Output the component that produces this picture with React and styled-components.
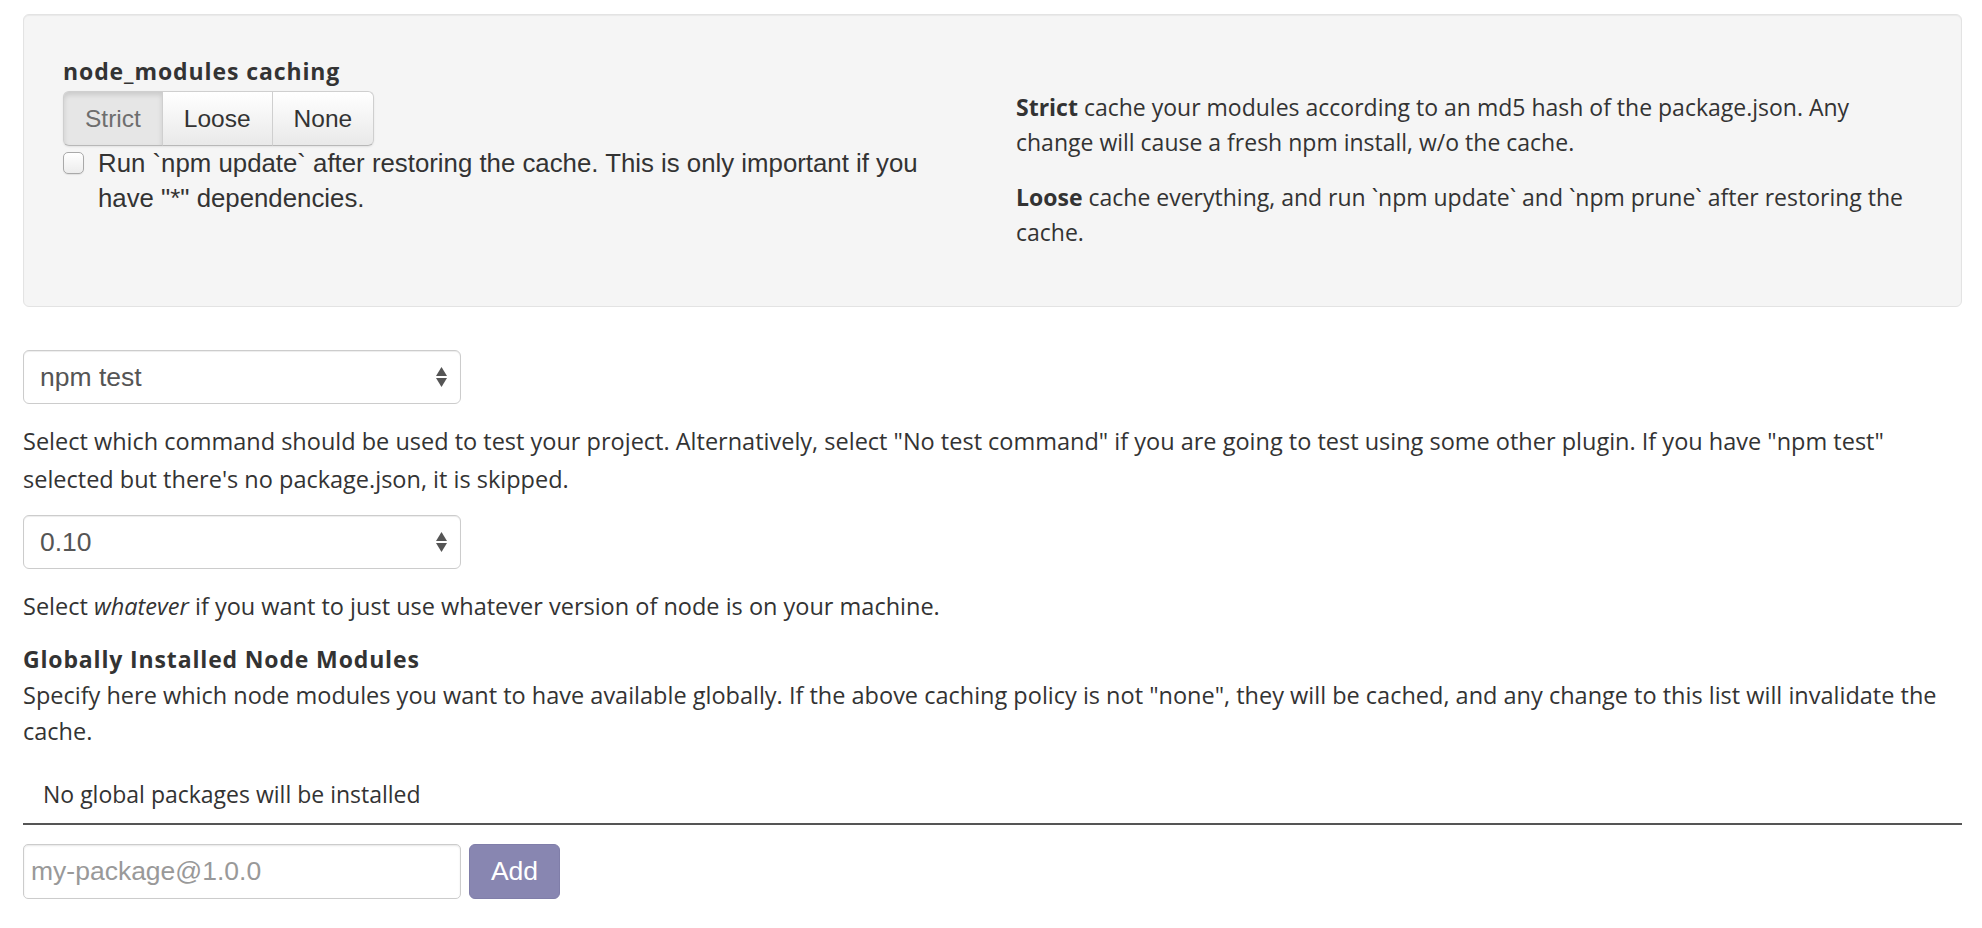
import React, { useState } from 'react';
import styled, { createGlobalStyle } from 'styled-components';

const GlobalStyle = createGlobalStyle`
    body {
        margin: 0;
        background: #fff;
        font-family: "Open Sans", "Noto Sans", sans-serif;
        color: #333;
    }
`;

const Page = styled.div`
    width: 1939px;
    padding: 14px 20px 0 23px;
    font-size: 23px;
    line-height: 35px;
`;

const Well = styled.div`
    display: grid;
    grid-template-columns: 906px 906px;
    column-gap: 47px;
    padding: 39px 39px 36px;
    background: #f5f5f5;
    border: 1px solid #e3e3e3;
    border-radius: 6px;
    box-shadow: inset 0 1px 1px rgba(0, 0, 0, 0.05);
`;

const LeftCol = styled.div`
    display: flex;
    flex-direction: column;
    align-items: flex-start;
`;

const RightCol = styled.div`
    padding-top: 36px;

    p {
        margin: 0 0 20px;
    }
`;

const Title = styled.div`
    font-weight: bold;
    letter-spacing: 0.9px;
`;

const BtnGroup = styled.div`
    display: flex;
    margin-top: 2px;
    border-radius: 6px;
    box-shadow: 0 1px 2px rgba(0, 0, 0, 0.08);
`;

const GroupButton = styled.button`
    height: 55px;
    padding: 0 21px;
    font-family: "Liberation Sans", Arial, sans-serif;
    font-size: 24.5px;
    color: ${({ active }) => (active ? '#6e6e6e' : '#333')};
    background: ${({ active }) => (active ? '#e6e6e6' : 'linear-gradient(#ffffff, #e9e9e9)')};
    box-shadow: ${({ active }) => (active ? 'inset 0 3px 5px rgba(0, 0, 0, 0.12)' : 'none')};
    border: 1px solid #cfcfcf;
    border-bottom-color: #b8b8b8;
    margin-left: -1px;
    cursor: pointer;

    &:first-child {
        margin-left: 0;
        border-radius: 6px 0 0 6px;
    }

    &:last-child {
        border-radius: 0 6px 6px 0;
    }
`;

const CheckRow = styled.label`
    display: flex;
    align-items: flex-start;
    gap: 14px;
    font-family: "Liberation Sans", Arial, sans-serif;
    font-size: 25.8px;
    line-height: 35px;
    color: #333;
`;

const CheckBox = styled.input`
    appearance: none;
    flex: none;
    width: 21px;
    height: 22px;
    margin: 6px 0 0;
    border: 1px solid #a9a9a9;
    border-radius: 5px;
    background: linear-gradient(#ffffff, #ececec);
    box-shadow: 0 1px 1px rgba(0, 0, 0, 0.08);
`;

const SelectWrap = styled.div`
    position: relative;
    width: 438px;
    margin-top: ${({ top }) => top}px;
`;

const Select = styled.select`
    appearance: none;
    width: 100%;
    height: 54px;
    padding: 0 40px 0 16px;
    font-family: "Liberation Sans", Arial, sans-serif;
    font-size: 26.5px;
    color: #555;
    background: #fff;
    border: 1px solid #ccc;
    border-radius: 6px;
    box-shadow: inset 0 1px 1px rgba(0, 0, 0, 0.075);
`;

const Arrows = styled.svg`
    position: absolute;
    right: 14px;
    top: 17px;
    pointer-events: none;
`;

const Help = styled.p`
    margin: ${({ top }) => top}px 0 0;
    font-size: 23.5px;
    line-height: ${({ lh }) => lh || 38}px;
`;

const Heading = styled.div`
    margin-top: 17px;
    font-weight: bold;
    letter-spacing: 0.85px;
`;

const Empty = styled.div`
    margin-top: 28px;
    padding-left: 20px;
`;

const Divider = styled.hr`
    margin: 11px 0 0;
    border: 0;
    border-top: 2px solid #555;
`;

const AddRow = styled.div`
    display: flex;
    gap: 8px;
    margin-top: 19px;
`;

const Input = styled.input`
    width: 438px;
    height: 55px;
    box-sizing: border-box;
    padding: 0 7px;
    font-family: "Liberation Sans", Arial, sans-serif;
    font-size: 26.5px;
    color: #555;
    border: 1px solid #ccc;
    border-radius: 5px;
    box-shadow: inset 0 1px 2px rgba(0, 0, 0, 0.1);

    &::placeholder {
        color: #999;
    }
`;

const AddButton = styled.button`
    width: 91px;
    height: 55px;
    font-family: "Liberation Sans", Arial, sans-serif;
    font-size: 26.5px;
    color: #fff;
    background: #8886b1;
    border: 1px solid #807ea9;
    border-radius: 6px;
    cursor: pointer;
`;

function SelectBox({ value, options, top }) {
    return (
        <SelectWrap top={top}>
            <Select defaultValue={value}>
                {options.map((o) => <option key={o}>{o}</option>)}
            </Select>
            <Arrows width="11" height="20" viewBox="0 0 11 20">
                <path d="M5.5 0 L11 9 L0 9 Z" fill="#555" />
                <path d="M0 11 L11 11 L5.5 20 Z" fill="#555" />
            </Arrows>
        </SelectWrap>
    );
}

export default function App() {
    const [mode, setMode] = useState('Strict');

    return (
        <Page>
            <GlobalStyle />
            <Well>
                <LeftCol>
                    <Title>node_modules caching</Title>
                    <BtnGroup>
                        {['Strict', 'Loose', 'None'].map((m) => (
                            <GroupButton key={m} active={mode === m} onClick={() => setMode(m)}>{m}</GroupButton>
                        ))}
                    </BtnGroup>
                    <CheckRow>
                        <CheckBox type="checkbox" />
                        <span>Run `npm update` after restoring the cache. This is only important if you have "*" dependencies.</span>
                    </CheckRow>
                </LeftCol>
                <RightCol>
                    <p><b>Strict</b> cache your modules according to an md5 hash of the package.json. Any change will cause a fresh npm install, w/o the cache.</p>
                    <p><b>Loose</b> cache everything, and run `npm update` and `npm prune` after restoring the cache.</p>
                </RightCol>
            </Well>

            <SelectBox value="npm test" options={['npm test', 'No test command']} top={43} />
            <Help top={18}>Select which command should be used to test your project. Alternatively, select "No test command" if you are going to test using some other plugin. If you have "npm test" selected but there's no package.json, it is skipped.</Help>

            <SelectBox value="0.10" options={['0.10', '0.8', 'whatever']} top={17} />
            <Help top={18}>Select <i>whatever</i> if you want to just use whatever version of node is on your machine.</Help>

            <Heading>Globally Installed Node Modules</Heading>
            <Help top={0} lh={36}>Specify here which node modules you want to have available globally. If the above caching policy is not "none", they will be cached, and any change to this list will invalidate the cache.</Help>

            <Empty>No global packages will be installed</Empty>
            <Divider />
            <AddRow>
                <Input placeholder="my-package@1.0.0" />
                <AddButton>Add</AddButton>
            </AddRow>
        </Page>
    );
}
